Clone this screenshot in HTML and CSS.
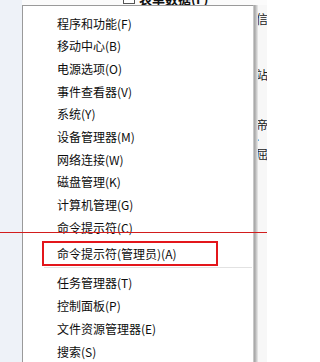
FILE: index.html
```html
<!DOCTYPE html>
<html lang="zh-CN">
<head>
<meta charset="utf-8">
<title>Win+X 菜单</title>
<link rel="stylesheet" href="styles.css">
</head>
<body>
<div class="screen">
  <div class="sidebar"></div>
  <div class="content">
    <div class="topbar">
      <div class="topinner"><span class="chk"></span><span class="toptext">表单数据(F)</span></div>
    </div>
    <div class="body-row">
      <div class="menu">
        <div class="item">程序和功能(F)</div>
        <div class="item">移动中心(B)</div>
        <div class="item">电源选项(O)</div>
        <div class="item">事件查看器(V)</div>
        <div class="item">系统(Y)</div>
        <div class="item">设备管理器(M)</div>
        <div class="item">网络连接(W)</div>
        <div class="item">磁盘管理(K)</div>
        <div class="item">计算机管理(G)</div>
        <div class="item">命令提示符(C)</div>
        <div class="item item-marked">命令提示符(管理员)(A)</div>
        <div class="sep"></div>
        <div class="item item-b">任务管理器(T)</div>
        <div class="item item-b">控制面板(P)</div>
        <div class="item item-b">文件资源管理器(E)</div>
        <div class="item item-b">搜索(S)</div>
      </div>
      <div class="shadow"></div>
      <div class="rightcol">
        <div class="frag f1">信</div>
        <div class="frag f2">站</div>
        <div class="frag f3">帝</div>
        <div class="frag dot f4">.</div>
        <div class="frag f5">屈</div>
      </div>
    </div>
  </div>
  <div class="redline"></div>
</div>
</body>
</html>
```
FILE: styles.css
```css
html, body {
  margin: 0;
  padding: 0;
  background: #ffffff;
}
.screen {
  position: relative;
  width: 267px;
  height: 362px;
  overflow: hidden;
  display: flex;
  font-family: "Noto Sans CJK SC", "Noto Sans", sans-serif;
  color: #0d0d0d;
}
.sidebar {
  width: 22px;
  flex: none;
  background: #eef2f8;
}
.content {
  flex: 1;
  display: flex;
  flex-direction: column;
  background: #fbfbfb;
}
.topbar {
  height: 5px;
  flex: none;
  overflow: hidden;
}
.topinner {
  display: flex;
  align-items: flex-end;
  height: 5px;
  padding-left: 101px;
}
.chk {
  width: 10px;
  height: 10px;
  border: 1px solid #555;
  background: #fff;
  flex: none;
  margin-bottom: 1px;
}
.toptext {
  font-size: 13px;
  font-weight: bold;
  line-height: 13px;
  margin-left: 4px;
  color: #111;
  flex: none;
}
.body-row {
  flex: 1;
  display: flex;
}
.menu {
  width: 230px;
  flex: none;
  background: #ffffff;
  border-top: 1px solid #9a9a9a;
  border-left: 1px solid #9a9a9a;
  border-right: 1px solid #c8c8c8;
  padding-top: 6.6px;
}
.item {
  height: 22.7px;
  line-height: 22.7px;
  font-size: 12px;
  padding-left: 34px;
  white-space: nowrap;
}
.item-b {
  height: 23px;
  line-height: 23px;
}
.item-marked {
  box-sizing: border-box;
  margin-top: 1.4px;
  margin-left: 19px;
  width: 176px;
  height: 25px;
  line-height: 21px;
  padding-left: 13px;
  border: 2px solid #e3161b;
}
.sep {
  height: 1px;
  margin: 1.6px 1px 2.6px 21px;
  background: #e2e2e2;
}
.shadow {
  width: 4px;
  flex: none;
  background: linear-gradient(to right, #a4a4a4, #b4b4b4, #d0d0d0, #ebebeb);
}
.rightcol {
  flex: 1;
  overflow: hidden;
  background: #f7f7f7;
}
.frag {
  font-size: 12px;
  line-height: 12px;
  height: 12px;
  margin-left: -2px;
  color: #222;
  white-space: nowrap;
}
.dot {
  height: 6px;
  line-height: 6px;
}
.f1 { margin-top: 8px; }
.f2 { margin-top: 44px; }
.f3 { margin-top: 38px; }
.f4 { margin-top: 2px; }
.f5 { margin-top: 9px; }
.redline {
  position: absolute;
  left: 0;
  top: 231.5px;
  width: 267px;
  height: 1px;
  background: #d21d1d;
}
```
